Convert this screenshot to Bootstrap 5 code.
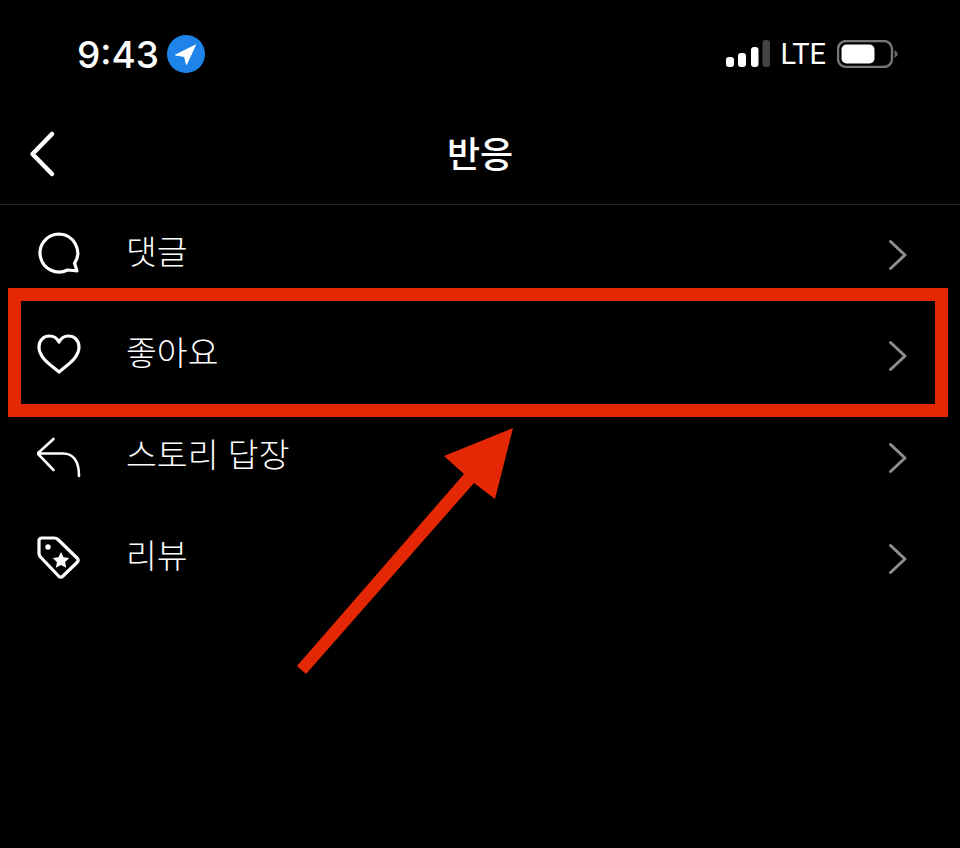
<!DOCTYPE html>
<html lang="ko">
<head>
  <meta charset="UTF-8" />
  <title>반응</title>
  <link rel="stylesheet" href="https://cdn.jsdelivr.net/npm/bootstrap@5.3.0/dist/css/bootstrap.min.css" />
  <style>
    body {
      background: #000;
      color: #fff;
      font-family: "Noto Sans CJK KR", "Liberation Sans", sans-serif;
    }
    .phone-page {
      position: relative;
      width: 960px;
      height: 848px;
      overflow: hidden;
    }
    .status-row {
      height: 108px;
      padding: 0 62px 0 77px;
    }
    .status-time {
      font-family: "Inter", "Liberation Sans", sans-serif;
      font-size: 37px;
      font-weight: 500;
      line-height: 1;
      letter-spacing: 0;
    }
    .status-lte {
      font-family: "Roboto", "Liberation Sans", sans-serif;
      font-size: 29px;
      font-weight: 400;
      line-height: 1;
      margin: 0 11px 0 10px;
    }
    .title-row {
      position: relative;
      height: 97px;
      padding-bottom: 8px;
      border-bottom: 1px solid #222;
    }
    .title-text {
      font-size: 36px;
      font-weight: 500;
      line-height: 1;
      margin: 0;
    }
    .back-icon {
      position: absolute;
      left: 24px;
      top: 22px;
    }
    .reaction-list {
      --bs-list-group-bg: transparent;
      --bs-list-group-color: #fff;
      --bs-list-group-border-width: 0;
    }
    .reaction-row {
      height: 101.33px;
      padding: 0 50px 5px 37px;
      font-size: 33.5px;
      font-weight: 300;
      gap: 45px;
    }
    .reaction-row svg.lead-icon { flex: 0 0 44px; }
    .reaction-label { padding-bottom: 6px; }
    .row-chevron { margin-top: 4px; }
    .highlight-box {
      position: absolute;
      left: 8px;
      top: 288px;
      width: 940px;
      height: 129px;
      border: 13px solid #e42806;
    }
    .highlight-arrow {
      position: absolute;
      left: 0;
      top: 0;
    }
  </style>
</head>
<body>
  <div class="phone-page">
    <!-- STATUS BAR -->
    <div class="status-row d-flex align-items-center justify-content-between">
      <div class="d-flex align-items-center gap-2">
        <span class="status-time">9:43</span>
        <svg width="38" height="38" viewBox="0 0 38 38">
          <circle cx="19" cy="19" r="19" fill="#1f84ea"/>
          <path d="M8.500 20 L28.500 10 L19.500 29.500 L17.500 21.500 Z" fill="#fff" stroke="#fff" stroke-width="1" stroke-linejoin="round"/>
        </svg>
      </div>
      <div class="d-flex align-items-center">
        <svg width="45" height="28" viewBox="0 0 45 28">
          <rect x="1" y="17" width="8" height="10" rx="3" fill="#fff"/>
          <rect x="13" y="13" width="8" height="14" rx="3" fill="#fff"/>
          <rect x="26" y="7" width="7.500" height="20" rx="3" fill="#fff"/>
          <rect x="37.500" y="0" width="7.500" height="27" rx="3" fill="#444"/>
        </svg>
        <span class="status-lte">LTE</span>
        <svg width="61" height="28" viewBox="0 0 61 28">
          <rect x="1" y="1" width="54" height="26" rx="8" fill="none" stroke="#777" stroke-width="2.400"/>
          <rect x="4.500" y="4.500" width="33" height="19" rx="5" fill="#fff"/>
          <path d="M57.500 10 L60.500 12.500 V15.500 L57.500 18 Z" fill="#666"/>
        </svg>
      </div>
    </div>

    <!-- HEADER -->
    <div class="title-row d-flex align-items-center justify-content-center">
      <svg class="back-icon" width="36" height="48" viewBox="0 0 36 48">
        <path d="M28 4 L8.500 24 L28 44" fill="none" stroke="#fff" stroke-width="4.500" stroke-linecap="round" stroke-linejoin="round"/>
      </svg>
      <h1 class="title-text">반응</h1>
    </div>

    <!-- REACTIONS -->
    <ul class="list-group list-group-flush reaction-list">
      <li class="list-group-item reaction-row d-flex align-items-center">
        <svg class="lead-icon" width="44" height="44" viewBox="0 0 44 44">
          <path d="M22 3 A19 19 0 1 0 30.500 39 C33 38.800 37 39.800 40 40 C38.800 37 38.500 33.500 37.500 32.500 A19 19 0 0 0 22 3 Z" fill="none" stroke="#fff" stroke-width="3.200" stroke-linejoin="round"/>
        </svg>
        <span class="reaction-label flex-grow-1">댓글</span>
        <svg class="row-chevron" width="24" height="32" viewBox="0 0 24 32">
          <path d="M4.500 2.500 L19 16 L4.500 29.500" fill="none" stroke="#8e8e8e" stroke-width="3" stroke-linecap="round" stroke-linejoin="round"/>
        </svg>
      </li>
      <li class="list-group-item reaction-row d-flex align-items-center">
        <svg class="lead-icon" width="44" height="44" viewBox="0 0 44 44">
          <path d="M22 40 C14 33 2 26 2 15 C2 8 7 4 12.500 4 C16.500 4 20 6 22 10 C24 6 27.500 4 31.500 4 C37 4 42 8 42 15 C42 26 30 33 22 40 Z" fill="none" stroke="#fff" stroke-width="3.200" stroke-linejoin="round"/>
        </svg>
        <span class="reaction-label flex-grow-1">좋아요</span>
        <svg class="row-chevron" width="24" height="32" viewBox="0 0 24 32">
          <path d="M4.500 2.500 L19 16 L4.500 29.500" fill="none" stroke="#8e8e8e" stroke-width="3" stroke-linecap="round" stroke-linejoin="round"/>
        </svg>
      </li>
      <li class="list-group-item reaction-row d-flex align-items-center">
        <svg class="lead-icon" width="44" height="44" viewBox="0 0 44 44">
          <path d="M16.500 5 L0.500 19.500 L16.500 36 M0.500 19.500 H26 C36 19.500 42 27 42 42" fill="none" stroke="#fff" stroke-width="2.600" stroke-linecap="round" stroke-linejoin="round"/>
        </svg>
        <span class="reaction-label flex-grow-1">스토리 답장</span>
        <svg class="row-chevron" width="24" height="32" viewBox="0 0 24 32">
          <path d="M4.500 2.500 L19 16 L4.500 29.500" fill="none" stroke="#8e8e8e" stroke-width="3" stroke-linecap="round" stroke-linejoin="round"/>
        </svg>
      </li>
      <li class="list-group-item reaction-row d-flex align-items-center">
        <svg class="lead-icon" width="44" height="44" viewBox="0 0 44 44">
          <path d="M5 3 H17 C19 3 20 3.500 21 4.500 L40 23 C41.500 24.500 41.500 26 40 27.500 L26 41 C24.500 42.500 23 42.500 21.500 41 L3.500 22 C2.500 21 2 20 2 18 V6 C2 4 3 3 5 3 Z" fill="none" stroke="#fff" stroke-width="3.200" stroke-linejoin="round"/>
          <circle cx="11" cy="12" r="2.700" fill="#fff"/>
          <path d="M24 17 L26.600 22.200 L32.300 23 L28.100 27 L29.100 32.700 L24 30 L18.900 32.700 L19.900 27 L15.700 23 L21.400 22.200 Z" fill="#fff"/>
        </svg>
        <span class="reaction-label flex-grow-1">리뷰</span>
        <svg class="row-chevron" width="24" height="32" viewBox="0 0 24 32">
          <path d="M4.500 2.500 L19 16 L4.500 29.500" fill="none" stroke="#8e8e8e" stroke-width="3" stroke-linecap="round" stroke-linejoin="round"/>
        </svg>
      </li>
    </ul>

    <!-- ANNOTATIONS -->
    <div class="highlight-box"></div>
    <svg class="highlight-arrow" width="960" height="848" viewBox="0 0 960 848">
      <path d="M513 428 L444 456 L464 474 L297 666 L306 674 L474 483 L495 499 Z" fill="#e42806"/>
    </svg>
  </div>
  <script src="https://cdn.jsdelivr.net/npm/bootstrap@5.3.0/dist/js/bootstrap.bundle.min.js"></script>
</body>
</html>
